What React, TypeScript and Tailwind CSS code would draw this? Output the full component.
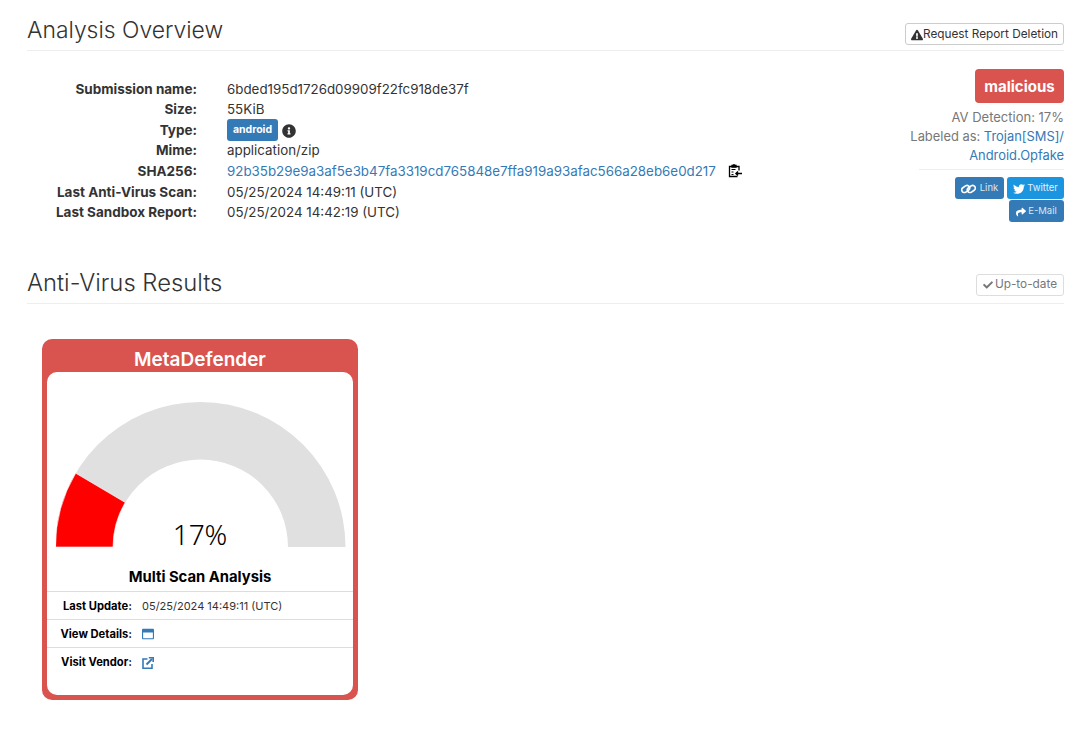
import React from "react";
import { FaExclamationTriangle, FaInfoCircle, FaTwitter, FaShare, FaCheck, FaRegWindowMaximize } from "react-icons/fa";

const rows: [string, React.ReactNode][] = [
  ["Submission name:", "6bded195d1726d09909f22fc918de37f"],
  ["Size:", "55KiB"],
  ["Type:", (
    <span className="flex items-center gap-1">
      <span className="inline-flex h-[22px] w-[51px] items-center justify-center rounded-[3px] bg-[#337ab7] text-[10.5px] font-bold text-white">android</span>
      <FaInfoCircle className="mt-[2px] text-[14px] text-[#333]" />
    </span>
  )],
  ["Mime:", "application/zip"],
  ["SHA256:", (
    <span className="flex items-center">
      <span className="text-[#337ab7]">92b35b29e9a3af5e3b47fa3319cd765848e7ffa919a93afac566a28eb6e0d217</span>
      <svg viewBox="0 0 14 14" className="ml-[12px] h-[14px] w-[14px]" fill="none" stroke="#000" strokeWidth="1.3">
        <path d="M9.5 12.5H1.5V2.5H11V6.5" />
        <path d="M4 3V1.5h1.5V.8h1V1.5H8V3z" fill="#000" />
        <path d="M3.5 5.5h4M3.5 8h2M3.5 10.5h2" strokeWidth="1" />
        <path d="M14 9.5H8M10 7.5 8 9.5l2 2" strokeWidth="1.5" />
      </svg>
    </span>
  )],
  ["Last Anti-Virus Scan:", "05/25/2024 14:49:11 (UTC)"],
  ["Last Sandbox Report:", "05/25/2024 14:42:19 (UTC)"],
];

function Gauge() {
  const cx = 144.5, cy = 145, R = 145, r = 87.5;
  const a = (17 / 100) * Math.PI;
  const p = (rad: number, an: number) => `${cx - rad * Math.cos(an)} ${cy - rad * Math.sin(an)}`;
  return (
    <svg viewBox="0 0 290 146" className="ml-[1px] h-[146px] w-[290px]">
      <path d={`M${p(R, 0)} A${R} ${R} 0 0 1 ${cx + R} ${cy} L${cx + r} ${cy} A${r} ${r} 0 0 0 ${cx - r} ${cy} Z`} fill="#e0e0e0" />
      <path d={`M${p(R, 0)} A${R} ${R} 0 0 1 ${p(R, a)} L${p(r, a)} A${r} ${r} 0 0 0 ${p(r, 0)} Z`} fill="#ff0000" stroke="#fff" strokeWidth="0.6" />
    </svg>
  );
}

function LinkGlyph() {
  return (
    <svg viewBox="0 0 16 12" className="h-[12px] w-[15px]" fill="none" stroke="#fff" strokeWidth="1.7">
      <rect x="0.5" y="3.2" width="9" height="5.6" rx="2.8" transform="rotate(-35 5 6)" />
      <rect x="6.5" y="3.2" width="9" height="5.6" rx="2.8" transform="rotate(-35 11 6)" />
    </svg>
  );
}

function SectionHeader({ title, children, cls }: { title: string; children: React.ReactNode; cls: string }) {
  return (
    <div className="flex h-[35px] items-end justify-between border-b border-[#eeeeee] pb-[6px]">
      <h2 className={`mb-[1px] font-light leading-[26px] text-[#333] ${cls}`}>{title}</h2>
      {children}
    </div>
  );
}

export default function App() {
  return (
    <div className="min-h-[729px] bg-white pl-[27px] pr-[15px] pt-[16px] text-[14px] text-[#333]" style={{ fontFamily: "Inter, 'Noto Sans', sans-serif" }}>
      <SectionHeader title="Analysis Overview" cls="text-[22.9px]">
        <button className="-mb-[1px] flex h-[22px] w-[159px] items-center justify-center whitespace-nowrap rounded-[3px] border border-[#ccc] pt-[1px] text-[11.8px] text-[#333]">
          <FaExclamationTriangle className="text-[12px]" />Request Report Deletion
        </button>
      </SectionHeader>

      <div className="flex justify-between pt-[27.4px]">
        <div className="flex flex-col">
          {rows.map(([k, v]) => (
            <div key={k} className="flex h-[20.6px] items-center">
              <div className="w-[170px] whitespace-nowrap text-right text-[13.5px] font-bold">{k}</div>
              <div className="ml-[30px] whitespace-nowrap text-[13.35px]">{v}</div>
            </div>
          ))}
        </div>
        <div className="-mt-[9.4px] flex w-[155px] flex-col items-end text-right">
          <div className="flex h-[34px] w-[89px] items-center justify-center rounded-[4px] bg-[#d9534f] pt-[3px] text-[15px] font-bold text-white">malicious</div>
          <div className="mt-[5px] text-[13px] leading-[19px] text-[#777]">AV Detection: 17%</div>
          <div className="text-[12.9px] leading-[19px] text-[#777]">Labeled as: <span className="text-[#337ab7]">Trojan[SMS]/<br />Android.Opfake</span></div>
          <div className="mb-[7px] mt-[4px] w-[145px] border-t border-[#eeeeee]" />
          <div className="flex gap-[3px]">
            <span className="flex h-[22px] w-[49px] items-center justify-center gap-[4px] rounded-[3px] bg-[#337ab7] pt-[1px] text-[9.5px] text-[#dbe6f0]"><LinkGlyph />Link</span>
            <span className="flex h-[22px] w-[57px] items-center justify-center gap-[2px] rounded-[3px] bg-[#1b95e0] pt-[1px] text-[9.5px] text-[#e3f1fb]"><FaTwitter className="text-[12px] text-white" />Twitter</span>
          </div>
          <span className="mt-[1px] flex h-[22px] w-[55px] items-center justify-center gap-[2px] rounded-[3px] bg-[#337ab7] pt-[1px] text-[9.5px] text-[#dbe6f0]"><FaShare className="text-[10px] text-white" />E-Mail</span>
        </div>
      </div>

      <div className="mt-[46px]">
        <SectionHeader title="Anti-Virus Results" cls="text-[23.8px]">
          <span className="mb-[1px] flex h-[22px] w-[88px] items-center justify-center gap-[2px] whitespace-nowrap rounded-[3px] border border-[#ddd] pt-[1px] text-[11.8px] text-[#777]">
            <FaCheck className="text-[10px]" />Up-to-date
          </span>
        </SectionHeader>
      </div>

      <div className="ml-[15px] mt-[35px] w-[316px] rounded-[10px] bg-[#d9534f] px-[5px] pb-[5px]">
        <div className="flex h-[33px] items-center justify-center pt-[8px] text-[19px] font-semibold leading-[25px] text-white">MetaDefender</div>
        <div className="h-[323px] rounded-[10px] bg-white">
          <div className="relative flex justify-center pt-[30px]">
            <Gauge />
            <div className="absolute bottom-[-3px] left-0 right-0 text-center text-[28px] font-light leading-[34px] text-black" style={{ fontFamily: "'Noto Sans', sans-serif" }}>17%</div>
          </div>
          <div className="mt-[17px] flex h-[27px] items-center justify-center border-b border-[#ddd] pb-[1px] text-[14.8px] font-bold text-black">Multi Scan Analysis</div>
          {[
            ["Last Update:", <span className="text-[11px]">05/25/2024 14:49:11 (UTC)</span>],
            ["View Details:", <FaRegWindowMaximize className="text-[12px] text-[#337ab7]" />],
            ["Visit Vendor:", (
              <svg viewBox="0 0 12 12" className="h-[12px] w-[12px]" fill="none" stroke="#337ab7" strokeWidth="1.6">
                <path d="M5.5 2H1v9.2h9V7" />
                <path d="M4.5 7.5 10 2" strokeWidth="2" />
                <path d="M6.8.8h4.4V5" strokeWidth="1.6" />
              </svg>
            )],
          ].map(([k, v], i) => (
            <div key={i} className={`flex h-[28px] items-center pt-[2px] text-black ${i < 2 ? "border-b border-[#ddd]" : ""}`}>
              <div className="w-[85px] whitespace-nowrap text-right text-[11.2px] font-bold">{k}</div>
              <div className="ml-[10px] flex items-center text-[#333]">{v}</div>
            </div>
          ))}
        </div>
      </div>
    </div>
  );
}
